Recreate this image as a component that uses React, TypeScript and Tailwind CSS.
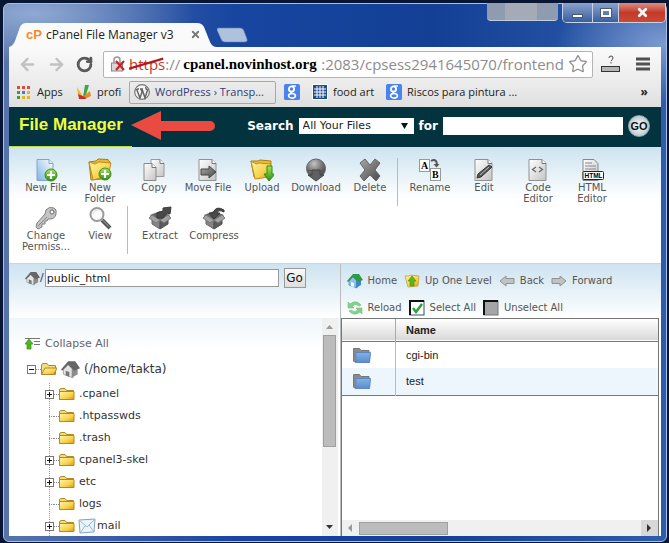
import type { ReactNode } from "react";
import { ArrowLeft, ArrowRight, RotateCw, Star, X } from "lucide-react";

const ui = "font-['Open_Sans','Noto_Sans',sans-serif]";
const verdana = "font-['DejaVu_Sans',sans-serif]";
const arial = "font-['Liberation_Sans',sans-serif]";

/* ---------- gradients shared by the icons ---------- */

function IconDefs() {
	return (
		<svg className="absolute h-0 w-0" aria-hidden="true">
			<defs>
				<linearGradient id="yellow" x1="0" y1="0" x2="1" y2="1">
					<stop offset="0" stopColor="#fff6a8" />
					<stop offset="0.6" stopColor="#f8d24e" />
					<stop offset="1" stopColor="#d99a10" />
				</linearGradient>
				<linearGradient id="sheet" x1="0" y1="0" x2="1" y2="1">
					<stop offset="0" stopColor="#ffffff" />
					<stop offset="1" stopColor="#c4c4c4" />
				</linearGradient>
				<linearGradient id="blueSheet" x1="1" y1="0" x2="0" y2="1">
					<stop offset="0" stopColor="#ffffff" />
					<stop offset="1" stopColor="#7db4e0" />
				</linearGradient>
				<linearGradient id="green" x1="0" y1="0" x2="0" y2="1">
					<stop offset="0" stopColor="#a4e65c" />
					<stop offset="1" stopColor="#2c8f12" />
				</linearGradient>
				<radialGradient id="ball" cx="0.4" cy="0.25" r="0.8">
					<stop offset="0" stopColor="#c4c4c4" />
					<stop offset="0.5" stopColor="#777777" />
					<stop offset="1" stopColor="#3c3c3c" />
				</radialGradient>
				<linearGradient id="metal" x1="0" y1="0" x2="1" y2="1">
					<stop offset="0" stopColor="#a8a8a8" />
					<stop offset="1" stopColor="#484848" />
				</linearGradient>
				<linearGradient id="blueFolder" x1="0" y1="0" x2="0" y2="1">
					<stop offset="0" stopColor="#85b2e4" />
					<stop offset="1" stopColor="#5a8ccb" />
				</linearGradient>
			</defs>
		</svg>
	);
}

/* ---------- toolbar icons (24 x 24) ---------- */

function Svg24({ children }: { children: ReactNode }) {
	return (
		<svg width="24" height="24" viewBox="0 0 24 24" className="shrink-0" aria-hidden="true">
			{children}
		</svg>
	);
}

function PlusBadge({ cx, cy }: { cx: number; cy: number }) {
	return (
		<g>
			<circle cx={cx} cy={cy} r="6" fill="url(#green)" stroke="#3c8a22" />
			<path
				d={`M${cx - 4} ${cy}h8M${cx} ${cy - 4}v8`}
				stroke="#fff"
				strokeWidth="2.2"
			/>
		</g>
	);
}

function NewFileIcon() {
	return (
		<Svg24>
			<path d="M3 1.5h12l4 4v17H3z" fill="url(#blueSheet)" stroke="#7aa7cf" />
			<path d="M15 1.5v4h4" fill="#e6f0f8" stroke="#7aa7cf" />
			<PlusBadge cx={17} cy={17} />
		</Svg24>
	);
}

function NewFolderIcon() {
	return (
		<Svg24>
			<path d="M1 4l7-1 2-2 10 .5 2 3-3 16L3 22z" fill="#e7b832" stroke="#a97c12" />
			<path d="M1 4l6 2 4-2 12 1-3 13-15 4z" fill="url(#yellow)" stroke="#c08d18" />
			<PlusBadge cx={17} cy={16} />
		</Svg24>
	);
}

function CopyIcon() {
	return (
		<Svg24>
			<path d="M9 1.5h9l4 4v13H9z" fill="url(#sheet)" stroke="#9a9a9a" />
			<path d="M18 1.5v4h4" fill="#fff" stroke="#777" />
			<path d="M2 5.5h8l4 4v13H2z" fill="url(#sheet)" stroke="#8a8a8a" />
			<path d="M10 5.5v4h4" fill="#fff" stroke="#777" />
		</Svg24>
	);
}

function MoveIcon() {
	return (
		<Svg24>
			<path d="M3 1.5h13l4 4v17H3z" fill="url(#sheet)" stroke="#929292" />
			<path d="M16 1.5v4h4" fill="#fff" stroke="#777" />
			<path d="M5 11h8V8l7 6-7 6v-3H5z" fill="url(#metal)" stroke="#444" />
		</Svg24>
	);
}

function UploadIcon() {
	return (
		<Svg24>
			<path d="M1 3l7 0 2-1 11 1-1 16H4z" fill="#e9bd38" stroke="#a97c12" />
			<path d="M1 3l5 3 3-1 12 1-2 13-14 2z" fill="url(#yellow)" stroke="#c08d18" />
			<path d="M17 8h5v8h3l-6 7-5-7h3z" fill="url(#green)" stroke="#2c8f12" />
		</Svg24>
	);
}

function DownloadIcon() {
	return (
		<Svg24>
			<circle cx="12" cy="10.5" r="9.5" fill="url(#ball)" stroke="#666" />
			<path d="M3 12q9 3 18 0" stroke="#555" fill="none" />
			<path d="M8 12h8v5h4l-8 6-8-6h4z" fill="#606060" stroke="#444" />
		</Svg24>
	);
}

function DeleteIcon() {
	return (
		<Svg24>
			<path
				d="M2 5l5-4 5 6 5-6 5 4-5 7 5 6-4 5-6-6-6 6-4-5 5-6z"
				fill="url(#metal)"
				stroke="#666"
			/>
		</Svg24>
	);
}

function RenameIcon() {
	return (
		<Svg24>
			<rect x="1.5" y="1.5" width="10" height="12" fill="#fff" stroke="#999" />
			<rect x="12.5" y="10.5" width="10" height="12" fill="#fff" stroke="#999" />
			<text x="3" y="11" fontSize="10" fontWeight="700" fontFamily="Liberation Serif, serif">
				A
			</text>
			<text x="14" y="20" fontSize="10" fontWeight="700" fontFamily="Liberation Serif, serif">
				B
			</text>
			<path d="M13 3q5-3 6 3" fill="none" stroke="#555" strokeWidth="2" />
			<path d="M15.5 6h6l-3 3.5z" fill="#555" />
		</Svg24>
	);
}

function EditIcon() {
	return (
		<Svg24>
			<path d="M3 1.5h13l4 4v17H3z" fill="url(#sheet)" stroke="#929292" />
			<path d="M16 1.5v4h4" fill="#fff" stroke="#777" />
			<path d="M17 7l3 2-11 10-4 1 1-4z" fill="#555" stroke="#333" />
			<path d="M8 17l9-8" stroke="#bbb" />
		</Svg24>
	);
}

function CodeIcon() {
	return (
		<Svg24>
			<path d="M3 1.5h13l4 4v17H3z" fill="url(#sheet)" stroke="#929292" />
			<path d="M16 1.5v4h4" fill="#fff" stroke="#777" />
			<path d="M10 9l-3.5 2.5L10 14M13 9l3.5 2.5L13 14" fill="none" stroke="#666" strokeWidth="1.3" />
		</Svg24>
	);
}

function HtmlIcon() {
	return (
		<Svg24>
			<path d="M3 1.5h11l4 4v17H3z" fill="url(#sheet)" stroke="#888" />
			<path d="M5 5h7M5 8h11M5 11h11" stroke="#888" />
			<rect x="3" y="13.5" width="20.5" height="8" rx="1" fill="#fff" stroke="#222" />
			<text x="4.5" y="20" fontSize="6.5" fontWeight="700" fontFamily="Liberation Sans, sans-serif">
				HTML
			</text>
		</Svg24>
	);
}

function KeyIcon() {
	return (
		<Svg24>
			<path
				d="M12 4q3-4 8-2 3 1 2 6-1 5-6 5h-2l-1 2-2 0 0 3-3 0 0 3-4 2-2-2 1-4 8-9z"
				fill="#c4c4c4"
				stroke="#808080"
			/>
			<circle cx="18" cy="6" r="2" fill="#fff" stroke="#666" />
			<path d="M4 20l9-9" stroke="#888" />
		</Svg24>
	);
}

function ViewIcon() {
	return (
		<Svg24>
			<path d="M14 14l8 8" stroke="#555" strokeWidth="4" />
			<path d="M14 13.5l7 7" stroke="#aaa" />
			<circle cx="9" cy="8.5" r="6.5" fill="#fbfbfb" stroke="#999" strokeWidth="2" />
			<path d="M5 8q1-4 5-4" stroke="#ddd" fill="none" />
		</Svg24>
	);
}

function Box() {
	return (
		<g>
			<path d="M2 9l10-4 10 4-3 3-7 3-8-3z" fill="#666" />
			<path d="M4 11l8 5v7l-8-5z" fill="#858585" stroke="#666" />
			<path d="M20 11l-8 5v7l8-5z" fill="#5c5c5c" stroke="#505050" />
			<path d="M4 9l-3 3 7 5 4-3zM20 9l3 3-7 5-4-3z" fill="#a2a2a2" stroke="#777" />
		</g>
	);
}

function ExtractIcon() {
	return (
		<Svg24>
			<Box />
			<path d="M9 12V7l6-2V2l8-1-1 7-3-1-4 5z" fill="#4a4a4a" stroke="#3a3a3a" />
		</Svg24>
	);
}

function CompressIcon() {
	return (
		<Svg24>
			<Box />
			<path d="M22 4q-8-5-11 3H7l5 6 6-6h-3q1-4 7-1z" fill="#4a4a4a" stroke="#3a3a3a" />
		</Svg24>
	);
}

/* ---------- small icons ---------- */

function HouseIcon({ size = 16, color = false }: { size?: number; color?: boolean }) {
	return (
		<svg width={size} height={size} viewBox="0 0 16 16" className="shrink-0" aria-hidden="true">
			<path d="M2 8l4-4 4 4v7l-8-3z" fill={color ? "#8cc4ee" : "#e4e4e4"} stroke={color ? "#3c7fb5" : "#999"} strokeWidth="0.7" />
			<path d="M9 8l5-1v5l-5 3z" fill={color ? "#3f86c4" : "#8c8c8c"} />
			<path d="M0 8l6-7 6 0 4 6-5 2-5-5-5 5z" fill={color ? "#2f9a45" : "#666"} />
			<path d="M4 9l3 1v4l-3-1z" fill={color ? "#fff" : "#777"} />
		</svg>
	);
}

function TreeFolder({ open = false }: { open?: boolean }) {
	return (
		<svg width="16" height="14" viewBox="0 0 16 14" className="shrink-0" aria-hidden="true">
			<path d="M.5 12.5V2.5l1.5-1h4l1.5 2h7v9z" fill="#f5dc7a" stroke="#b08a25" />
			{open ? (
				<path d="M.5 12.5L4 6h12l-3 6.5z" fill="url(#yellow)" stroke="#b08a25" />
			) : (
				<path d="M.5 4.5h14.5v8H.5z" fill="url(#yellow)" stroke="#b08a25" />
			)}
		</svg>
	);
}

function BlueFolder() {
	return (
		<svg width="18" height="16" viewBox="0 0 18 16" aria-hidden="true">
			<path d="M.5 14V1.5h6l1.5 2h8V15H1.5z" fill="#8b8b8b" stroke="#777" />
			<path d="M3 5.5h14.5L16.5 15.500H2.500z" fill="url(#blueFolder)" stroke="#5a88c0" />
		</svg>
	);
}

function UpLevelIcon() {
	return (
		<svg width="16" height="16" viewBox="0 0 16 16" aria-hidden="true">
			<path d="M1 3l4 0 1-1 9 1-1 10-10 1z" fill="url(#yellow)" stroke="#c9b04f" />
			<path d="M8 3l4 5h-2v5H6V8H4z" fill="#62b51b" stroke="#3d8a10" strokeWidth="0.6" />
		</svg>
	);
}

function BlockArrow({ back = false }: { back?: boolean }) {
	return (
		<svg width="16" height="12" viewBox="0 0 16 12" aria-hidden="true">
			<path
				d={back ? "M1 6l6-5v2.5h8v5H7V11z" : "M15 6L9 1v2.5H1v5h8V11z"}
				fill="#c2c2c2"
				stroke="#909090"
			/>
		</svg>
	);
}

function ReloadIcon() {
	return (
		<svg width="16" height="16" viewBox="0 0 16 16" aria-hidden="true">
			<path d="M1 2v6h6L5 6q4-3 7 0l2-1Q9-1 3 4z" fill="#86cf8c" stroke="#5cb568" strokeWidth="0.5" />
			<path d="M15 14V8H9l2 2q-4 3-7 0l-2 1q5 6 11 1z" fill="#86cf8c" stroke="#5cb568" strokeWidth="0.5" />
		</svg>
	);
}

function CheckedIcon() {
	return (
		<svg width="16" height="16" viewBox="0 0 16 16" aria-hidden="true">
			<rect x="1" y="1" width="14" height="14" fill="#fff" stroke="#356" />
			<path d="M1 15V1h14" fill="none" stroke="#111" strokeWidth="2" />
			<path d="M4 8l3 4 6-8" fill="none" stroke="#2aa040" strokeWidth="2.5" />
		</svg>
	);
}

function UncheckedIcon() {
	return (
		<svg width="16" height="16" viewBox="0 0 16 16" aria-hidden="true">
			<rect x="1" y="1" width="14" height="14" fill="#a5a5a5" stroke="#777" />
			<path d="M1 15V1h14" fill="none" stroke="#111" strokeWidth="2" />
		</svg>
	);
}

function CollapseIcon() {
	return (
		<svg width="16" height="14" viewBox="0 0 16 14" aria-hidden="true">
			<path d="M0 1.5h15M9 4.5h6M9 7.5h6" stroke="#777" />
			<path d="M4 2l4 5H6v5H2V7H0z" fill="#4db81f" stroke="#358c10" strokeWidth="0.7" />
		</svg>
	);
}

function MailIcon() {
	return (
		<svg width="18" height="16" viewBox="0 0 18 16" className="shrink-0" aria-hidden="true">
			<path d="M1 2l16-1-1 13-14 1z" fill="#eaf3fa" stroke="#7fa3c2" />
			<path d="M1 2l8 7 8-8M2 15l5-7M16 14l-5-7" fill="none" stroke="#9db9d2" />
		</svg>
	);
}

function GoogleIcon() {
	return (
		<svg width="16" height="16" viewBox="0 0 16 16" className="shrink-0" aria-hidden="true">
			<rect width="16" height="16" rx="1.5" fill="#4a83ec" />
			<circle cx="7.5" cy="5" r="2.6" fill="none" stroke="#fff" strokeWidth="1.8" />
			<path d="M8 2h4" stroke="#fff" strokeWidth="1.4" />
			<path d="M8 7.5q-2 1.200 0 2" fill="none" stroke="#fff" strokeWidth="1.6" />
			<ellipse cx="8" cy="11.8" rx="3.4" ry="2.3" fill="none" stroke="#fff" strokeWidth="1.6" />
		</svg>
	);
}

/* ---------- browser chrome ---------- */

function TabStrip() {
	return (
		<div className="flex h-[43px] items-end">
			<div className="relative flex h-6 w-[208px] items-center pb-px">
				<svg
					className="absolute inset-0 h-full w-full"
					viewBox="0 0 208 24"
					preserveAspectRatio="none"
					aria-hidden="true"
				>
					<path d="M0 24q4-1 6-6l5-14q2-4 6-4h171q5 0 7 4l6 15q2 5 7 5z" fill="#fafafa" />
				</svg>
				<div className={`relative flex w-full items-center pl-[17px] text-xs text-[#222] ${ui}`}>
					<span className={`w-[20px] text-[13px] leading-4 font-bold text-[#f58a1f] ${arial}`}>
						cP
					</span>
					<span className="whitespace-nowrap">cPanel File Manager v3</span>
					<button type="button" aria-label="Close tab" className="mr-4 ml-auto">
						<X size={11} strokeWidth={4} color="#777" />
					</button>
				</div>
			</div>
			<button type="button" aria-label="New tab" className="mb-1">
				<svg width="31" height="16" viewBox="0 0 31 16" aria-hidden="true">
					<path d="M0 3q-1-2 2-2h21q3 0 4 3l3 8q1 3-2 3H8q-3 0-4-3z" fill="#afc2dc" stroke="#5e80b5" strokeWidth="0.6" />
				</svg>
			</button>
		</div>
	);
}

function WindowButtons() {
	return (
		<div className="absolute -top-px right-0 flex h-5 items-stretch">
			<div className="mr-1 flex h-[18px] w-[71px] rounded-b border-b border-[#c0cde4] bg-[#8f9cb0]">
				<div className="ml-[18px] w-8 bg-[#a4abb6]" />
			</div>
			<div className="flex overflow-hidden rounded-b-[5px] border border-t-0 border-[#c5d2e8]">
				<button type="button" aria-label="Minimize" className="flex w-[29px] items-end justify-center bg-linear-to-b from-[#8ba3cd] to-[#3a5e9f] pb-1">
					<span className="h-1 w-[11px] border border-[#4a5870] bg-white" />
				</button>
				<button type="button" aria-label="Maximize" className="flex w-[27px] items-center justify-center border-x border-[#c5d2e8] bg-linear-to-b from-[#8ba3cd] to-[#3a5e9f]">
					<span className="h-2 w-[10px] border-2 border-white outline outline-[#4a5870]" />
				</button>
				<button type="button" aria-label="Close" className="flex w-[46px] items-center justify-center bg-linear-to-b from-[#dc8a80] via-[#c33a28] to-[#c84a35]">
					<X size={13} strokeWidth={5} color="#fff" />
				</button>
			</div>
		</div>
	);
}

function LockIcon() {
	return (
		<svg width="16" height="18" viewBox="0 0 16 18" className="shrink-0" aria-hidden="true">
			<path d="M4 9V5q0-3 3-3t3 3v4" fill="none" stroke="#999" strokeWidth="1.6" />
			<rect x="1.5" y="8" width="11" height="8" fill="#d8d8d8" stroke="#888" />
			<path d="M6 6l8 9M14 6l-8 9" stroke="#cc1c24" strokeWidth="2" />
		</svg>
	);
}

function AddressRow() {
	return (
		<div className="flex h-[34px] items-center bg-linear-to-b from-[#fafafa] to-[#ececec] pl-[9px]">
			<button type="button" aria-label="Back" className="w-[29px]">
				<ArrowLeft size={19} strokeWidth={3} color="#c2c2c2" />
			</button>
			<button type="button" aria-label="Forward" className="w-[29px]">
				<ArrowRight size={19} strokeWidth={3} color="#c2c2c2" />
			</button>
			<button type="button" aria-label="Reload" className="w-[27px]">
				<RotateCw size={17} strokeWidth={4} color="#5a5a5a" />
			</button>
			<div className="flex h-[27px] min-w-0 flex-1 items-center overflow-hidden rounded-[2px] border border-[#b4b4b4] bg-white pr-1 pl-[6px]">
				<LockIcon />
				<div className={`flex min-w-0 flex-1 items-center overflow-hidden pl-[3px] text-[15px] whitespace-nowrap text-[#8c8c8c] ${ui}`}>
					<span className="relative text-[#c0392b]">
						https
						<svg className="absolute inset-0 h-full w-full" viewBox="0 0 36 20" preserveAspectRatio="none" aria-hidden="true">
							<path d="M0 14L34 5" stroke="#b01c1c" strokeWidth="2" />
						</svg>
					</span>
					<span className="w-[19px]">://</span>
					<span className="w-[145px] font-['Liberation_Serif',serif] font-bold text-black">
						cpanel.novinhost.org
					</span>
					<span>:2083/cpsess2941645070/frontend</span>
				</div>
				<button type="button" aria-label="Bookmark this page" className="ml-1 shrink-0">
					<Star size={20} strokeWidth={1.5} color="#8a8a8a" />
				</button>
			</div>
			<button type="button" aria-label="Extension" className="ml-2">
				<svg width="20" height="18" viewBox="0 0 20 18" aria-hidden="true">
					<path d="M8 3q0-2 2-2t2 2q0 1-2 3" fill="none" stroke="#444" />
					<path d="M10 7v1.5" stroke="#444" />
					<rect x=".5" y="11.5" width="18" height="5" fill="#b5b5b5" stroke="#333" />
				</svg>
			</button>
			<button type="button" aria-label="Menu" className="mr-[11px] ml-[15px]">
				<svg width="14" height="14" viewBox="0 0 14 14" aria-hidden="true">
					<path d="M0 2h14M0 7h14M0 12h14" stroke="#505050" strokeWidth="3" />
				</svg>
			</button>
		</div>
	);
}

const appColors = ["#dd4b39", "#dd4b39", "#dd4b39", "#3f9c46", "#3d7de0", "#efb321", "#3f9c46", "#efb321", "#efb321"];

function BookmarksBar() {
	return (
		<nav className={`flex h-[26px] items-center bg-linear-to-b from-[#ececec] to-[#dfdfdf] pb-1 pl-2 text-[11px] whitespace-nowrap text-[#222] ${ui}`}>
			<a href="#apps" className="flex w-[59px] items-center gap-[7px]">
				<span className="grid grid-cols-3 gap-[2px]">
					{appColors.map((c, i) => (
						<span key={i} className="h-[3px] w-[3px]" style={{ background: c }} />
					))}
				</span>
				Apps
			</a>
			<a href="#profi" className="flex w-[53px] items-center gap-[5px]">
				<svg width="16" height="16" viewBox="0 0 16 16" aria-hidden="true">
					<path d="M1 3l5 8 2 4-6-4z" fill="#e8b92a" />
					<path d="M9 1l4 0-3 10-3 2z" fill="#3fa54a" />
					<path d="M14 7l1 5-6 3-2-2z" fill="#e58d2c" />
					<path d="M2 10l7 3 1 2-7 0z" fill="#cc2d2d" />
				</svg>
				profi
			</a>
			<a href="#wordpress" className="flex h-[23px] w-[147px] items-center gap-[5px] rounded-[2px] border border-[#a8a8a8] pl-1 text-[#2f3c78]">
				<svg width="16" height="16" viewBox="0 0 16 16" className="shrink-0" aria-hidden="true">
					<circle cx="8" cy="8" r="7.3" fill="#f4f4f4" stroke="#777" strokeWidth="1.2" />
					<path d="M2.5 5l3.5 9 2-6-1-3M6 5h3M8 5l3 9 2.5-8q-2-1-1.5-3M3 5h2" fill="none" stroke="#666" strokeWidth="1.5" />
				</svg>
				WordPress › Transp...
			</a>
			<a href="#google" aria-label="Google" className="ml-2">
				<GoogleIcon />
			</a>
			<a href="#food" className="ml-3 flex items-center gap-[5px]">
				<svg width="16" height="16" viewBox="0 0 16 16" aria-hidden="true">
					<rect width="16" height="16" fill="#fff" />
					<rect x="1" y="1" width="14" height="14" fill="#1d4f91" />
					<path d="M2 5h12M2 8h12M2 11h12M5 2v12M8 2v12M11 2v12" stroke="#fff" />
				</svg>
				food art
			</a>
			<a href="#riscos" className="ml-3 flex items-center gap-[5px]">
				<GoogleIcon />
				Riscos para pintura ...
			</a>
			<button type="button" aria-label="More bookmarks" className="mr-[13px] ml-auto text-xs font-bold">
				»
			</button>
		</nav>
	);
}

/* ---------- cPanel page ---------- */

function Header() {
	return (
		<header className={`flex h-10 items-center bg-[#02333f] text-white ${verdana}`}>
			<h1 className={`relative flex h-full w-[123px] items-center border-b border-[#b9d84a] pl-[10px] text-[17px] font-bold whitespace-nowrap text-[#f0ff3d] ${arial}`}>
				<span className="pb-1">File Manager</span>
				<svg className="absolute top-1 left-[122px]" width="86" height="30" viewBox="0 0 86 30" aria-hidden="true">
					<path d="M0 14L30 0v10h49a5 5 0 0 1 0 10H30v9z" fill="#e94b43" />
				</svg>
			</h1>
			<form className="ml-auto flex items-center pr-[11px] pb-[2px]" onSubmit={(e) => e.preventDefault()}>
				<label htmlFor="scope" className="pr-[5px] text-xs font-bold">
					Search
				</label>
				<div className="relative">
					<select id="scope" className="block h-4 w-[115px] appearance-none bg-white pl-1 text-[11px] leading-4 text-[#222]">
						<option>All Your Files</option>
					</select>
					<svg className="pointer-events-none absolute top-[5px] right-[6px]" width="7" height="6" viewBox="0 0 7 6" aria-hidden="true">
						<path d="M0 0h7L3.5 6z" fill="#111" />
					</svg>
				</div>
				<label htmlFor="query" className="px-[5px] text-xs font-bold">
					for
				</label>
				<input id="query" type="text" className="h-[18px] w-[180px] bg-white px-1 text-[11px] text-black" />
				<button
					type="submit"
					className={`ml-[5px] flex h-[22px] w-[22px] items-center justify-center rounded-full border border-[#8ba4ac] bg-radial from-white to-[#9fb8c0] text-[11px] font-bold text-[#111] ${arial}`}
				>
					GO
				</button>
			</form>
		</header>
	);
}

type Tool = { label: string; icon: ReactNode } | "separator";

const tools: Tool[] = [
	{ label: "New File", icon: <NewFileIcon /> },
	{ label: "New Folder", icon: <NewFolderIcon /> },
	{ label: "Copy", icon: <CopyIcon /> },
	{ label: "Move File", icon: <MoveIcon /> },
	{ label: "Upload", icon: <UploadIcon /> },
	{ label: "Download", icon: <DownloadIcon /> },
	{ label: "Delete", icon: <DeleteIcon /> },
	"separator",
	{ label: "Rename", icon: <RenameIcon /> },
	{ label: "Edit", icon: <EditIcon /> },
	{ label: "Code Editor", icon: <CodeIcon /> },
	{ label: "HTML Editor", icon: <HtmlIcon /> },
	{ label: "Change Permiss...", icon: <KeyIcon /> },
	{ label: "View", icon: <ViewIcon /> },
	"separator",
	{ label: "Extract", icon: <ExtractIcon /> },
	{ label: "Compress", icon: <CompressIcon /> },
];

function Toolbar() {
	return (
		<div className="flex flex-wrap border-b border-[#c9d6de] bg-linear-to-b from-[#cde3f0] to-white to-45% pt-[11px] pb-[9px] pl-[10px]">
			{tools.map((tool, i) =>
				tool === "separator" ? (
					<div key={i} className="mr-[5px] h-12 w-px bg-[#b4bcc2]" />
				) : (
					<button
						key={tool.label}
						type="button"
						className={`flex h-12 w-[54px] flex-col items-center text-[10px] leading-[11px] text-[#555] ${verdana}`}
					>
						{tool.icon}
						{tool.label}
					</button>
				),
			)}
		</div>
	);
}

function PathBar() {
	return (
		<form
			className={`flex h-[54px] items-start bg-linear-to-b from-[#cde3f0] to-white pt-1 pr-[34px] pl-4 text-[11px] text-[#333] ${verdana}`}
			onSubmit={(e) => e.preventDefault()}
		>
			<label htmlFor="path" className="flex h-5 items-center pr-px">
				<HouseIcon size={15} />/
			</label>
			<div className="flex h-5 flex-1 items-center">
				<input
					id="path"
					type="text"
					aria-label="Path"
					defaultValue="public_html"
					className="mr-[5px] h-[18px] min-w-0 flex-1 border border-[#999] bg-white px-px text-[#222]"
				/>
				<button type="submit" className="h-5 w-[22px] border border-[#999] bg-linear-to-b from-[#fafafa] to-[#dedede] text-xs text-[#111]">
					Go
				</button>
			</div>
		</form>
	);
}

const folders = [
	{ name: ".cpanel", expandable: true },
	{ name: ".htpasswds", expandable: false },
	{ name: ".trash", expandable: false },
	{ name: "cpanel3-skel", expandable: true },
	{ name: "etc", expandable: true },
	{ name: "logs", expandable: false },
	{ name: "mail", expandable: true },
];

function Expander({ open = false }: { open?: boolean }) {
	return (
		<button type="button" aria-label={open ? "Collapse" : "Expand"} className="shrink-0 bg-white">
			<svg width="9" height="9" viewBox="0 0 9 9" aria-hidden="true">
				<rect x=".5" y=".5" width="8" height="8" fill="#fff" stroke="#777" />
				<path d={open ? "M2 4.5h5" : "M2 4.5h5M4.5 2v5"} stroke="#111" />
			</svg>
		</button>
	);
}

function FolderTree() {
	return (
		<div className={`flex min-h-0 flex-1 bg-linear-to-b from-[#eff6fa] to-white to-15% pr-[2px] text-[#333] ${verdana}`}>
			<div className="min-w-0 flex-1 overflow-hidden pt-[15px] pl-4">
				<button type="button" className="flex h-[22px] items-center gap-1 text-[11px] text-[#666]">
					<CollapseIcon />
					Collapse All
				</button>
				<div className="flex h-7 items-center pl-[2px] text-xs">
					<Expander open />
					<span className="w-[5px] border-t border-dotted border-[#888]" />
					<TreeFolder open />
					<span className="pr-1 pl-1">
						<HouseIcon size={19} />
					</span>
					(/home/takta)
				</div>
				<ul className="pl-5 text-[11px]">
					{folders.map((f) => (
						<li key={f.name} className="flex h-[22px] items-center bg-[linear-gradient(to_bottom,#999_50%,transparent_50%)] bg-size-[1px_2px] bg-position-[4px_0] bg-repeat-y">
							{f.expandable ? <Expander /> : <span className="ml-1 w-[5px] border-t border-dotted border-[#888]" />}
							<span className="w-[5px] border-t border-dotted border-[#888]" />
							<TreeFolder />
							{f.name === "mail" && (
								<span className="pl-[3px]">
									<MailIcon />
								</span>
							)}
							<span className={f.name === "mail" ? "pl-px" : "pl-1"}>{f.name}</span>
						</li>
					))}
				</ul>
			</div>
			<div className="flex w-4 flex-col items-center bg-[#f0f0f0]">
				<svg width="7" height="17" viewBox="0 0 7 17" className="shrink-0" aria-hidden="true">
					<path d="M3.5 7L7 11H0z" fill="#999" />
				</svg>
				<div className="h-[112px] w-[13px] shrink-0 border border-[#a0a0a0] bg-[#bcbcbc]" />
				<svg width="7" height="17" viewBox="0 0 7 17" className="mt-auto shrink-0" aria-hidden="true">
					<path d="M3.5 10L7 6H0z" fill="#333" />
				</svg>
			</div>
		</div>
	);
}

const actions = [
	{ label: "Home", icon: <HouseIcon color /> },
	{ label: "Up One Level", icon: <UpLevelIcon /> },
	{ label: "Back", icon: <BlockArrow back /> },
	{ label: "Forward", icon: <BlockArrow /> },
	{ label: "Reload", icon: <ReloadIcon /> },
	{ label: "Select All", icon: <CheckedIcon /> },
	{ label: "Unselect All", icon: <UncheckedIcon /> },
];

function Listing() {
	return (
		<section className="flex min-h-0 min-w-0 flex-32 flex-col border-l border-[#bbb]">
			<div className={`flex h-[54px] flex-wrap gap-x-[7px] bg-linear-to-b from-[#cde3f0] to-white pr-2 pl-[6px] text-[10px] text-[#555] ${verdana}`}>
				{actions.map((a) => (
					<button key={a.label} type="button" className="flex h-[27px] items-center gap-[5px] pt-[6px] whitespace-nowrap">
						{a.icon}
						{a.label}
					</button>
				))}
			</div>
			<div className="mr-[2px] flex min-h-0 flex-1 flex-col border border-b-0 border-[#777] bg-white">
				<table className={`w-full border-collapse text-left text-[11px] text-[#222] ${arial}`}>
					<thead>
						<tr className="h-[22px] border-b border-[#777] bg-linear-to-b from-white to-[#d9d9d9]">
							<th className="w-[54px] border-r border-[#aaa]" aria-label="Type" />
							<th className="pl-[10px] font-bold">Name</th>
						</tr>
					</thead>
					<tbody>
						{["cgi-bin", "test"].map((name) => (
							<tr key={name} className="h-[27px] last:border-b last:border-[#777] even:bg-[#edf5fd]">
								<td className="border-r border-[#bbb] pl-[11px]">
									<BlueFolder />
								</td>
								<td className="pl-[10px]">{name}</td>
							</tr>
						))}
					</tbody>
				</table>
				<div className="mt-auto flex h-4 items-center bg-[#f0f0f0]">
					<svg width="17" height="16" viewBox="0 0 17 16" className="shrink-0" aria-hidden="true">
						<path d="M6 8l4-4v8z" fill="#999" />
					</svg>
					<div className="h-[13px] w-[89px] border border-[#a0a0a0] bg-[#bcbcbc]" />
					<svg width="17" height="16" viewBox="0 0 17 16" className="ml-auto shrink-0 bg-[#d8d8d8]" aria-hidden="true">
						<path d="M10 8L6 4v8z" fill="#333" />
					</svg>
				</div>
			</div>
		</section>
	);
}

export default function App() {
	return (
		<div className="flex h-screen flex-col bg-[#081634] pt-[3px] pr-[2px] pb-px pl-[3px]">
			<IconDefs />
			<div className="relative flex min-h-0 flex-1 flex-col rounded-md border border-[#a9bfe2] bg-[radial-gradient(ellipse_160px_50px_at_30px_10px,#8fa9d2,transparent),radial-gradient(ellipse_110px_60px_at_100%_40px,#7d9bd0,transparent),linear-gradient(to_right,#5773ab,#1745a0_35%,#134095_65%,#2e5cab)] px-[5px] pb-[5px]">
				<TabStrip />
				<WindowButtons />
				<div className="flex min-h-0 flex-1 flex-col overflow-hidden bg-white">
					<AddressRow />
					<BookmarksBar />
					<Header />
					<Toolbar />
					<main className="flex min-h-0 flex-1">
						<section className="flex min-w-0 flex-33 flex-col">
							<PathBar />
							<FolderTree />
						</section>
						<Listing />
					</main>
				</div>
			</div>
		</div>
	);
}
